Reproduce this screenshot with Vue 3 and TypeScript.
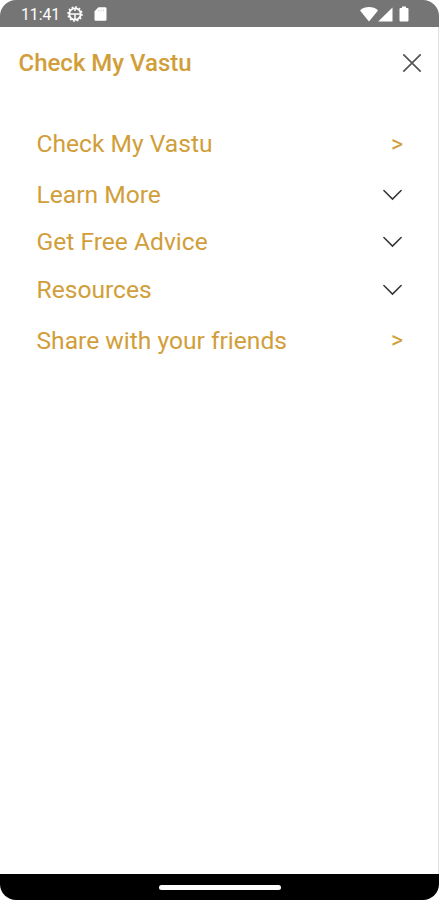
<script setup lang="ts">
interface MenuEntry {
  label: string
  kind: 'link' | 'group'
}

const entries: MenuEntry[] = [
  { label: 'Check My Vastu', kind: 'link' },
  { label: 'Learn More', kind: 'group' },
  { label: 'Get Free Advice', kind: 'group' },
  { label: 'Resources', kind: 'group' },
  { label: 'Share with your friends', kind: 'link' },
]
</script>

<template>
  <div class="phone">
    <header class="status">
      <span class="clock">11:41</span>
      <svg class="wheel" width="16" height="16" viewBox="0 0 16 16" fill="none" stroke="#fff">
        <circle cx="8" cy="8" r="5.7" stroke-width="1.8" />
        <circle cx="8" cy="8" r="7" stroke-width="1.5" stroke-dasharray="1.9 1.765" />
        <path d="M3 8h10M8 8v5M8 3v2" stroke-width="1.5" />
      </svg>
      <svg class="card" width="13" height="14" viewBox="0 0 13 14">
        <path d="M4.5.2h6.7a1.3 1.3 0 0 1 1.3 1.3v10.9a1.3 1.3 0 0 1-1.3 1.3H1.8A1.3 1.3 0 0 1 .5 12.4V4.2z" fill="#fff" />
        <path d="M4.8 2.4v2M7.1 2.4v2M9.4 2.4v2" stroke="#ccc" stroke-width=".8" />
      </svg>
      <div class="signals">
        <svg width="18" height="15" viewBox="0 0 18 15" fill="#fff">
          <path d="M0 3.4C5-1 13-1 18 3.4L9 14.6z" />
        </svg>
        <svg width="15" height="15" viewBox="0 0 15 15" fill="#fff">
          <path d="M14.5.4v14.1H.2z" />
        </svg>
        <svg class="battery" width="10" height="16" viewBox="0 0 10 16" fill="#fff">
          <path d="M3 .4h4v1.5h1.5a1 1 0 0 1 1 1v11.6a1 1 0 0 1-1 1h-7a1 1 0 0 1-1-1V2.9a1 1 0 0 1 1-1H3z" />
        </svg>
      </div>
    </header>

    <main class="drawer">
      <div class="heading">
        <h1>Check My Vastu</h1>
        <button class="close" aria-label="Close">
          <svg width="20" height="20" viewBox="0 0 20 20" fill="none" stroke="#555" stroke-width="1.7">
            <path d="M1.3 1.3l17.4 17.4M18.7 1.3 1.3 18.7" />
          </svg>
        </button>
      </div>
      <nav class="menu">
        <a v-for="entry in entries" :key="entry.label" class="row" :class="entry.kind">
          <span class="label">{{ entry.label }}</span>
          <span v-if="entry.kind === 'link'" class="arrow">&gt;</span>
          <svg v-else class="chevron" width="21" height="12" viewBox="0 0 21 12" fill="none" stroke="#333" stroke-width="1.5" stroke-linecap="round">
            <path d="M1.9 1.5l8.6 8.6 8.6-8.6" />
          </svg>
        </a>
      </nav>
    </main>

    <footer class="navbar"><span class="handle"></span></footer>
  </div>
</template>

<style>
body {
  background: #fff;
}
</style>

<style scoped>
.phone {
  width: 439px;
  height: 900px;
  box-sizing: border-box;
  display: flex;
  flex-direction: column;
  overflow: hidden;
  border-radius: 16px;
  background: #fff;
  font-family: Roboto, "Liberation Sans", sans-serif;
  color: #d19e3a;
}
.status {
  height: 27px;
  flex: none;
  box-sizing: border-box;
  display: flex;
  align-items: center;
  padding: 1px 30px 0 21px;
  background: #757575;
}
.clock {
  width: 39px;
  font-size: 15.7px;
  line-height: 26px;
  padding-top: 1px;
  color: #fff;
}
.wheel {
  margin-left: 7px;
}
.card {
  margin-left: 10.5px;
}
.signals {
  margin-left: auto;
  display: flex;
  align-items: center;
}
.battery {
  margin-left: 6px;
}
.drawer {
  flex: 1;
  border-right: 1px solid #e2e2e2;
}
.heading {
  height: 72px;
  display: flex;
  align-items: center;
  justify-content: space-between;
  padding: 0 16px 0 18.5px;
}
h1 {
  margin: 0;
  font-size: 24px;
  font-weight: 500;
  line-height: 30px;
}
.close {
  display: flex;
  padding: 0;
  border: 0;
  background: none;
}
.menu {
  display: flex;
  flex-direction: column;
  padding: 18px 35px 0 36.5px;
}
.row {
  display: flex;
  align-items: center;
  justify-content: space-between;
  font-size: 24.6px;
}
.link {
  height: 54px;
}
.group {
  height: 47.6px;
}
.label {
  white-space: nowrap;
  padding-bottom: 1.4px;
}
.arrow {
  font-size: 23px;
}
.navbar {
  height: 26px;
  flex: none;
  display: flex;
  align-items: center;
  justify-content: center;
  background: #000;
}
.handle {
  width: 122px;
  height: 5px;
  border-radius: 3px;
  background: #fff;
}
</style>
